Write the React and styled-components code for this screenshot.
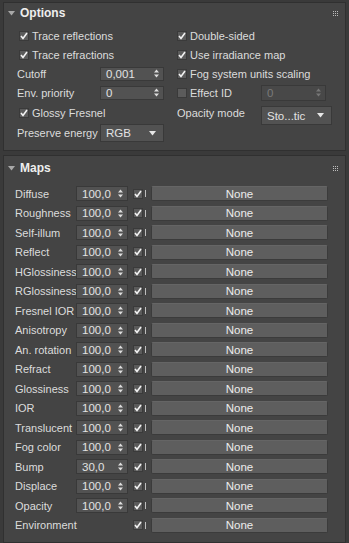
import React from "react";
import styled, { createGlobalStyle } from "styled-components";

const Global = createGlobalStyle`
  html, body { margin: 0; padding: 0; background: #3a3a3a; }
  body { font-family: "Liberation Sans", Arial, sans-serif; font-size: 11px; color: #dcdcdc; }
  * { box-sizing: border-box; }
`;

const Page = styled.div`
  width: 349px;
  height: 543px;
  overflow: hidden;
  background: #3a3a3a;
  padding: 2px 3px 0 3px;
  display: flex;
  flex-direction: column;
  gap: 4px;
`;

const Panel = styled.section`
  background: #444444;
  border: 1px solid #303030;
  position: relative;
  flex: ${(p) => (p.$grow ? 1 : "none")};
`;

const Header = styled.div`
  height: ${(p) => p.$h}px;
  display: flex;
  align-items: center;
  gap: 5px;
  padding-left: 4px;
  font-weight: bold;
  font-size: 12px;
  color: #eeeeee;
`;

const Grip = styled.div`
  position: absolute;
  right: 6px;
  top: ${(p) => p.$top}px;
  width: 6px;
  height: 6px;
  display: grid;
  grid-template-columns: repeat(3, 1px);
  grid-template-rows: repeat(3, 1px);
  gap: 1px;
  & > span { background: #bdbdbd; }
`;

const Tri = () => (
  <svg width="7" height="5" viewBox="0 0 7 5">
    <path d="M0 0 L7 0 L3.5 4.5 Z" fill="#a8a8a8" />
  </svg>
);

const GripDots = ({ top }) => (
  <Grip $top={top}>
    {Array.from({ length: 9 }).map((_, i) => (
      <span key={i} />
    ))}
  </Grip>
);

const OptGrid = styled.div`
  display: grid;
  grid-template-columns: 160px 1fr;
  grid-template-rows: 19px 19px 19px 19px 21px 20px;
  padding: 3px 0 7px 13px;
`;

const Cell = styled.div`
  display: flex;
  align-items: ${(p) => (p.$top ? "flex-start" : "center")};
  gap: ${(p) => p.$gap ?? 3}px;
  grid-row: ${(p) => p.$row || "auto"};
  grid-column: ${(p) => p.$col || "auto"};
  padding-left: ${(p) => p.$pl || 0}px;
  padding-top: ${(p) => (p.$top ? 4 : 0)}px;
`;

const Label = styled.span`
  width: ${(p) => (p.$w ? p.$w + "px" : "auto")};
  white-space: nowrap;
  margin-top: ${(p) => p.$mt || 0}px;
  padding-left: ${(p) => p.$pl || 0}px;
  color: #dcdcdc;
`;

const BoxEl = styled.span`
  width: 10px;
  height: 10px;
  flex: none;
  background: #5b5b5b;
  border: 1px solid #3a3a3a;
  display: flex;
  align-items: center;
  justify-content: center;
`;

const Check = ({ on = true }) => (
  <BoxEl>
    {on && (
      <svg width="8" height="8" viewBox="0 0 8 8">
        <path d="M1 4 L3 6.5 L7 1" stroke="#f2f2f2" strokeWidth="1.6" fill="none" />
      </svg>
    )}
  </BoxEl>
);

const SpinBox = styled.div`
  width: ${(p) => p.$w}px;
  height: ${(p) => p.$h || 15}px;
  flex: none;
  background: ${(p) => (p.$disabled ? "#484848" : "#525252")};
  border: 1px solid #393939;
  display: flex;
  align-items: center;
  justify-content: space-between;
  padding: 0 4px 0 5px;
  font-size: 11.5px;
  color: ${(p) => (p.$disabled ? "#7a7a7a" : "#e2e2e2")};
`;

const Arrows = ({ dim }) => (
  <svg width="5" height="9" viewBox="0 0 5 9">
    <path d="M0 3.5 L2.5 0.5 L5 3.5 Z M0 5.5 L2.5 8.5 L5 5.5 Z" fill={dim ? "#777" : "#dedede"} />
  </svg>
);

const Spinner = ({ value, w, h, disabled }) => (
  <SpinBox $w={w} $h={h} $disabled={disabled}>
    <span>{value}</span>
    <Arrows dim={disabled} />
  </SpinBox>
);

const DropBox = styled.div`
  width: ${(p) => p.$w}px;
  height: ${(p) => p.$h}px;
  flex: none;
  background: #525252;
  border: 1px solid #393939;
  display: flex;
  align-items: center;
  justify-content: space-between;
  padding: 0 7px 0 5px;
  font-size: 11.5px;
  color: #e2e2e2;
`;

const Dropdown = ({ value, w, h }) => (
  <DropBox $w={w} $h={h}>
    <span>{value}</span>
    <svg width="7" height="5" viewBox="0 0 7 5">
      <path d="M0 0 L7 0 L3.5 4.5 Z" fill="#e6e6e6" />
    </svg>
  </DropBox>
);

const MapList = styled.div`
  display: flex;
  flex-direction: column;
  padding: 4px 0 0 11px;
`;

const MapRow = styled.div`
  height: 19.5px;
  display: grid;
  grid-template-columns: 61px 52px 5px 10px 2px 1px 5px 177px;
  align-items: center;
`;

const Tick = styled.span`
  width: 1px;
  height: 7px;
  background: #bdbdbd;
`;

const NoneButton = styled.div`
  height: 15px;
  background: #5e5e5e;
  border: 1px solid #3b3b3b;
  border-top-color: #656565;
  border-radius: 2px;
  display: flex;
  align-items: center;
  justify-content: center;
  font-size: 11.5px;
  color: #ececec;
`;

const maps = [
  ["Diffuse", "100,0"],
  ["Roughness", "100,0"],
  ["Self-illum", "100,0"],
  ["Reflect", "100,0"],
  ["HGlossiness", "100,0"],
  ["RGlossiness", "100,0"],
  ["Fresnel IOR", "100,0"],
  ["Anisotropy", "100,0"],
  ["An. rotation", "100,0"],
  ["Refract", "100,0"],
  ["Glossiness", "100,0"],
  ["IOR", "100,0"],
  ["Translucent", "100,0"],
  ["Fog color", "100,0"],
  ["Bump", "30,0"],
  ["Displace", "100,0"],
  ["Opacity", "100,0"],
  ["Environment", null],
];

export default function App() {
  return (
    <Page>
      <Global />
      <Panel>
        <Header $h={20}>
          <Tri />
          Options
        </Header>
        <GripDots top={8} />
        <OptGrid>
          <Cell $row={1} $col={1} $pl={2}><Check /><Label>Trace reflections</Label></Cell>
          <Cell $row={2} $col={1} $pl={2}><Check /><Label>Trace refractions</Label></Cell>
          <Cell $row={3} $col={1} $gap={0}><Label $w={83}>Cutoff</Label><Spinner value="0,001" w={64} h={14} /></Cell>
          <Cell $row={4} $col={1} $gap={0}><Label $w={83}>Env. priority</Label><Spinner value="0" w={64} h={14} /></Cell>
          <Cell $row={5} $col={1} $pl={2}><Check /><Label>Glossy Fresnel</Label></Cell>
          <Cell $row={6} $col={1} $gap={0}><Label $w={83}>Preserve energy</Label><Dropdown value="RGB" w={64} h={18} /></Cell>

          <Cell $row={1} $col={2}><Check /><Label>Double-sided</Label></Cell>
          <Cell $row={2} $col={2}><Check /><Label>Use irradiance map</Label></Cell>
          <Cell $row={3} $col={2}><Check /><Label>Fog system units scaling</Label></Cell>
          <Cell $row={4} $col={2} $gap={0}>
            <Check on={false} />
            <Label $w={74} $pl={3}>Effect ID</Label>
            <Spinner value="0" w={65} h={16} disabled />
          </Cell>
          <Cell $row="5 / span 2" $col={2} $gap={0} $top>
            <Label $w={84} $mt={1}>Opacity mode</Label>
            <Dropdown value="Sto...tic" w={71} h={19} />
          </Cell>
        </OptGrid>
      </Panel>
      <Panel $grow>
        <Header $h={24}>
          <Tri />
          Maps
        </Header>
        <GripDots top={10} />
        <MapList>
          {maps.map(([name, val]) => (
            <MapRow key={name}>
              <Label>{name}</Label>
              {val ? <Spinner value={val} w={52} h={15} /> : <span />}
              <span />
              <Check />
              <span />
              <Tick />
              <span />
              <NoneButton>None</NoneButton>
            </MapRow>
          ))}
        </MapList>
      </Panel>
    </Page>
  );
}
